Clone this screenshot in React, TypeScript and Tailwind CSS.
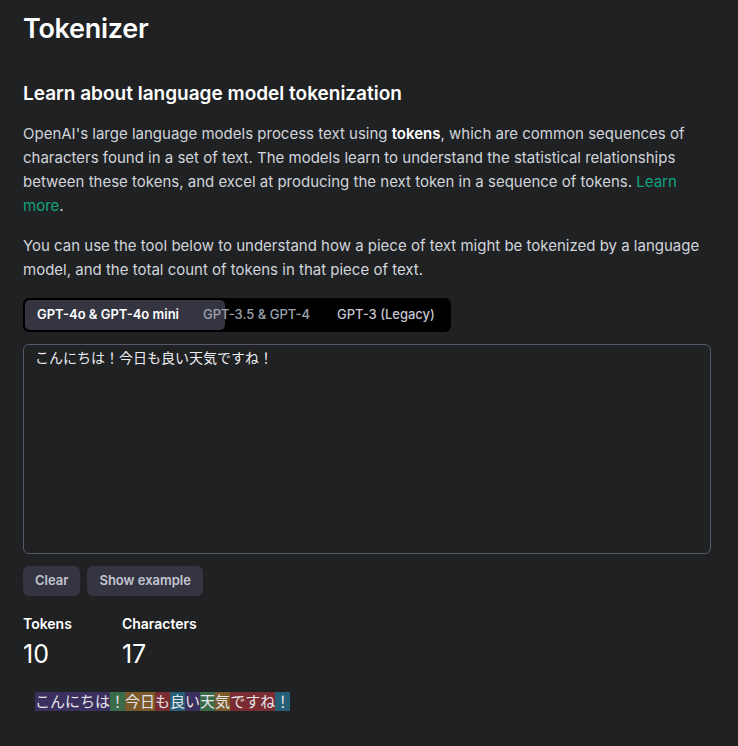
import React, { useState } from "react";

const tokens: { text: string; color: string }[] = [
  { text: "こんにちは", color: "bg-[#3b2f5e]" },
  { text: "！", color: "bg-[#3a6b48]" },
  { text: "今日", color: "bg-[#7a5a2a]" },
  { text: "も", color: "bg-[#7a2c31]" },
  { text: "良", color: "bg-[#255f76]" },
  { text: "い", color: "bg-[#3b2f5e]" },
  { text: "天", color: "bg-[#3a6b48]" },
  { text: "気", color: "bg-[#7a5a2a]" },
  { text: "ですね", color: "bg-[#7a2c31]" },
  { text: "！", color: "bg-[#255f76]" },
];

const App: React.FC = () => {
  const [text, setText] = useState("こんにちは！今日も良い天気ですね！");

  return (
    <div
      className="min-h-[746px] bg-[#202123] text-[#ececf1] px-[23px] pt-[12px]"
      style={{ fontFamily: "Inter, 'Noto Sans CJK JP', sans-serif" }}
    >
      {/* Title */}
      <h1 className="text-[27px] leading-[34px] font-semibold text-white tracking-[-0.01em]">
        Tokenizer
      </h1>

      <h2 className="mt-[34px] text-[19px] leading-[28px] font-semibold text-white">
        Learn about language model tokenization
      </h2>

      <p className="mt-[14px] text-[15px] leading-[24px] text-[#d1d5db]">
        OpenAI's large language models process text using{" "}
        <strong className="font-semibold text-white">tokens</strong>, which are
        common sequences of characters found in a set of text. The models learn
        to understand the statistical relationships between these tokens, and
        excel at producing the next token in a sequence of tokens.{" "}
        <a href="#" className="text-[#10a37f]">
          Learn more
        </a>
        .
      </p>

      <p className="mt-[16px] text-[15px] leading-[24px] text-[#d1d5db]">
        You can use the tool below to understand how a piece of text might be
        tokenized by a language model, and the total count of tokens in that
        piece of text.
      </p>

      {/* Model tabs */}
      <div className="mt-[16px] relative inline-flex items-center bg-black rounded-md p-[2px] h-[34px]">
        <div className="absolute left-[2px] top-[2px] bottom-[2px] w-[200px] rounded-[5px] bg-[#343541]" />
        <button className="relative px-3 h-full text-[13px] font-semibold text-white">
          GPT-4o & GPT-4o mini
        </button>
        <button className="relative pl-3 pr-[14px] h-full text-[13px] font-medium text-[#9ca3af]">
          GPT-3.5 & GPT-4
        </button>
        <button className="relative pl-[13px] pr-[14px] h-full text-[13px] font-medium text-[#c5c5d2]">
          GPT-3 (Legacy)
        </button>
      </div>

      {/* Input */}
      <textarea
        value={text}
        onChange={(e) => setText(e.target.value)}
        className="mt-[12px] block w-[688px] h-[210px] resize-none rounded-md border border-[#565869] bg-transparent px-[11px] py-[2px] text-[14px] leading-[22px] text-[#ececf1] outline-none"
      />

      <div className="mt-[12px] flex gap-[7px]">
        <button className="h-[30px] px-3 rounded-md bg-[#343541] text-[13px] font-semibold text-[#c5c5d2]">
          Clear
        </button>
        <button className="h-[30px] px-3 rounded-md bg-[#343541] text-[13px] font-semibold text-[#c5c5d2]">
          Show example
        </button>
      </div>

      {/* Stats */}
      <div className="mt-[18px] flex gap-[50px]">
        <div>
          <div className="text-[14px] leading-[20px] font-semibold text-white">Tokens</div>
          <div className="mt-[4px] text-[25px] leading-[32px] text-white">10</div>
        </div>
        <div>
          <div className="text-[14px] leading-[20px] font-semibold text-white">Characters</div>
          <div className="mt-[4px] text-[25px] leading-[32px] text-white">17</div>
        </div>
      </div>

      {/* Tokenized output */}
      <div className="mt-[23px] px-[12px] text-[15px] leading-[18px] text-[#e5e5ea]">
        {tokens.map((t, i) => (
          <span key={i} className={t.color}>
            {t.text}
          </span>
        ))}
      </div>
    </div>
  );
};

export default App;
